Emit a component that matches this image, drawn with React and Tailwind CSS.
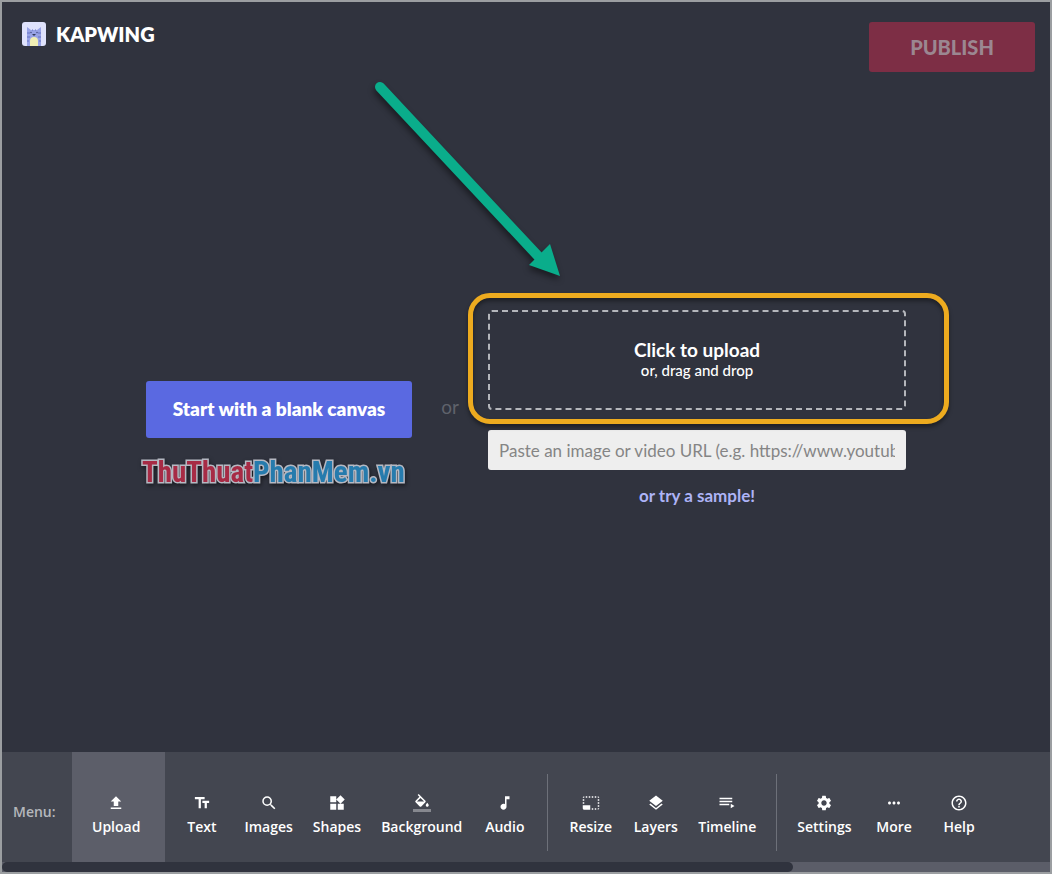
import React from "react";
import {
  MdTextFields,
  MdSearch,
  MdWidgets,
  MdMusicNote,
  MdPhotoSizeSelectSmall,
  MdLayers,
  MdSettings,
  MdMoreHoriz,
  MdHelpOutline,
} from "react-icons/md";

function UploadIcon() {
  return (
    <svg viewBox="0 0 24 24" width="18" height="18" fill="currentColor" aria-hidden="true">
      <path d="M9 16h6v-6h4l-7-7-7 7h4zm-4 2h14v2H5z" />
    </svg>
  );
}

function FillIcon() {
  return (
    <svg viewBox="0 0 24 24" width="18" height="18" fill="currentColor" aria-hidden="true">
      <path d="M16.56 8.94L7.62 0 6.21 1.41l2.38 2.38-5.15 5.15a1.49 1.49 0 0 0 0 2.12l5.5 5.5c.29.29.68.44 1.06.44s.77-.15 1.06-.44l5.5-5.5c.59-.58.59-1.53 0-2.12zM5.21 10L10 5.21 14.79 10H5.21zM19 11.5s-2 2.17-2 3.5c0 1.1.9 2 2 2s2-.9 2-2c0-1.330-2-3.500-2-3.500z" />
      <path fillOpacity=".36" d="M0 20h24v4H0z" />
    </svg>
  );
}

function TimelineIcon() {
  return (
    <svg viewBox="0 0 24 24" width="18" height="18" fill="currentColor" aria-hidden="true">
      <path d="M19 9H2v2h17V9zm0-4H2v2h17V5zM2 15h13v-2H2v2zm15-2v6l5-3-5-3z" />
    </svg>
  );
}

function Logo() {
  return (
    <svg viewBox="0 0 24 24" className="size-6" aria-hidden="true">
      <rect width="24" height="24" rx="3" fill="#dfe2fc" />
      <path d="M5 24V5l4 3h6l4-3v19z" fill="#98a3e6" />
      <path d="M5 11h3M16 11h3M5 15h3M16 15h3M5 19h2M17 19h2M10 8h1M13 8h1" stroke="#6672c4" strokeWidth="1" />
      <path d="M8 24v-5a4 4 0 0 1 8 0v5z" fill="#f1efb4" />
      <path d="M10 12h4l-2 2z" fill="#343a5c" />
      <circle cx="9" cy="10.500" r=".8" fill="#4b548c" />
      <circle cx="15" cy="10.500" r=".8" fill="#4b548c" />
    </svg>
  );
}

const groups = [
  [
    ["Text", <MdTextFields size={18} />],
    ["Images", <MdSearch size={18} />],
    ["Shapes", <MdWidgets size={18} />],
    ["Background", <FillIcon />],
    ["Audio", <MdMusicNote size={18} />],
  ],
  [
    ["Resize", <MdPhotoSizeSelectSmall size={18} />],
    ["Layers", <MdLayers size={18} />],
    ["Timeline", <TimelineIcon />],
  ],
  [
    ["Settings", <MdSettings size={18} />],
    ["More", <MdMoreHoriz size={18} />],
    ["Help", <MdHelpOutline size={18} />],
  ],
];

function Tool({ label, icon, active }) {
  return (
    <button
      type="button"
      className={
        "flex shrink-0 flex-col items-center justify-center gap-[5px] self-stretch pt-4 text-sm font-semibold text-white " +
        (active ? "bg-[#5c5e69] pl-5 pr-[25px]" : "min-w-[65px] px-[10px]")
      }
    >
      {icon}
      <span>{label}</span>
    </button>
  );
}

function PointerArrow() {
  return (
    <svg
      viewBox="0 0 200 206"
      width="200"
      height="206"
      className="pointer-events-none absolute bottom-full right-[338px] mb-[30px] drop-shadow-[-1px_4px_3px_rgba(0,0,0,0.45)]"
      aria-hidden="true"
    >
      <path d="M12 13L170 182" stroke="#0aad8b" strokeWidth="10" strokeLinecap="round" />
      <path d="M192 202L182 170L161 191Z" fill="#0aad8b" />
    </svg>
  );
}

export default function App() {
  return (
    <div className="flex min-h-screen flex-col overflow-hidden border-2 border-[#9b9ea1] bg-[#30333e] font-['Lato',sans-serif] text-white">
      <header className="flex items-start justify-between pl-5 pr-[15px] pt-5">
        <a href="#" className="flex items-center gap-[10px] text-xl font-extrabold leading-6">
          <Logo />
          KAPWING
        </a>
        <button
          type="button"
          disabled
          className="h-[50px] w-[166px] rounded-[3px] bg-[#7d2e45] text-xl font-black text-[#9b8791]"
        >
          PUBLISH
        </button>
      </header>

      <main className="flex flex-1 items-center justify-center px-8 pb-[6px]">
        <div className="relative shrink-0">
          <button
            type="button"
            className="h-[57px] w-[266px] rounded-[3px] bg-[#5a69e1] text-[19px] font-extrabold"
          >
            Start with a blank canvas
          </button>
          <div className="pointer-events-none absolute -left-1 top-full mt-[14px] whitespace-nowrap font-['Roboto_Condensed','Open_Sans_Condensed','Roboto',sans-serif] text-[29px] font-bold leading-10 [-webkit-text-stroke:3px_#b5b8c2] [paint-order:stroke_fill] drop-shadow-[1px_2px_2px_rgba(0,0,0,0.5)]">
            <span className="text-[#a72b45]">ThuThuat</span>
            <span className="text-[#267bad]">PhanMem.vn</span>
          </div>
        </div>

        <span className="w-[76px] shrink-0 pb-1 text-center text-[19px] text-[#5f626b]">or</span>

        <div className="flex w-[418px] flex-col">
          <div className="relative">
            <button
              type="button"
              className="flex h-[100px] w-full flex-col items-center justify-center rounded-[4px] border-2 border-dashed border-[#b4b6bb]"
            >
              <span className="text-[19px] font-bold leading-5">Click to upload</span>
              <span className="text-[15px] font-medium leading-5">or, drag and drop</span>
            </button>
            <div className="pointer-events-none absolute -bottom-[14px] -left-5 -right-[43px] -top-[17px] rounded-[22px] border-[5px] border-[#edab1f] shadow-[0_3px_4px_rgba(0,0,0,0.4),inset_0_3px_4px_rgba(0,0,0,0.4)]" />
            <PointerArrow />
          </div>
          <input
            type="url"
            aria-label="Image or video URL"
            placeholder="Paste an image or video URL (e.g. https://www.youtube.com/watch)"
            className="mt-5 h-10 w-full rounded-[3px] bg-[#eeeeee] px-[11px] text-[17px] text-gray-800 placeholder:text-[#858585]"
          />
          <a href="#" className="mt-[14px] self-center text-[17px] font-bold leading-6 text-[#adb3f7]">
            or try a sample!
          </a>
        </div>
      </main>

      <footer className="font-['Open_Sans',sans-serif]">
        <nav aria-label="Menu" className="flex h-[110px] items-center bg-[#434650]">
          <span className="w-[70px] shrink-0 pl-[11px] pt-[10px] text-sm font-semibold text-[#b5b7bc]">Menu:</span>
          <Tool label="Upload" icon={<UploadIcon />} active />
          <div className="ml-1 flex items-center self-stretch">
            {groups.map((group, i) => (
              <React.Fragment key={i}>
                {i > 0 && <div className="mx-[10px] mt-[10px] h-[77px] w-px bg-[#6d7079]" />}
                {group.map(([label, icon]) => (
                  <Tool key={label} label={label} icon={icon} />
                ))}
              </React.Fragment>
            ))}
          </div>
        </nav>
        <div className="h-[10px] bg-[#5b5d68]">
          <div className="h-full w-[75.5%] rounded-full bg-[#30333e]" />
        </div>
      </footer>
    </div>
  );
}
